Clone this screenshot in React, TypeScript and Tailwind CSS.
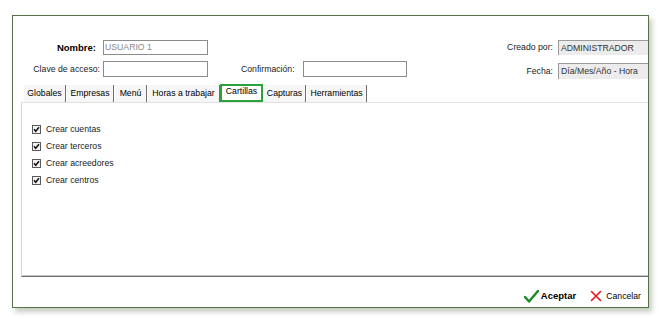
import React from "react";

const tabs = [
  { name: "Globales", w: "w-[43px]" },
  { name: "Empresas", w: "w-[48px]" },
  { name: "Menú", w: "w-[33px]" },
  { name: "Horas a trabajar", w: "w-[73px]" },
  { name: "Cartillas", w: "w-[43px]", active: true },
  { name: "Capturas", w: "w-[43px]" },
  { name: "Herramientas", w: "w-[61px]" },
];

const items = ["Crear cuentas", "Crear terceros", "Crear acreedores", "Crear centros"];

function Check() {
  return (
    <svg width="9" height="9" viewBox="0 0 9 9" className="shrink-0">
      <rect x="0.5" y="0.5" width="8" height="8" fill="#f2f2f2" stroke="#5a5a5a" />
      <path d="M2 4.3 L3.7 6.3 L7 2.3" fill="none" stroke="#111" strokeWidth="1.5" />
    </svg>
  );
}

export default function App() {
  return (
    <div className="w-[665px] h-[319px] bg-white pt-[15px] pl-[12px] font-['Liberation_Sans',_Arial,_sans-serif] text-[8.7px] text-[#1a1a1a] leading-none">
      <div className="w-[637px] h-[293px] border border-[#56724a] bg-white flex flex-col shadow-[3px_4px_5px_rgba(90,110,80,0.35)]">
        {/* Row 1 */}
        <div className="mt-[24px] flex items-center h-[15px]">
          <span className="w-[83px] text-right font-bold text-[9.5px] text-black">Nombre:</span>
          <div className="ml-[7px] w-[105px] h-[15px] border border-[#8c8c8c] bg-white flex items-center pl-[1px] text-[#8a8a8a]">
            USUARIO 1
          </div>
          <div className="flex-1" />
          <span className="mr-[5px]">Creado por:</span>
          <div className="w-[90px] h-[15px] bg-[#ececec] border-l border-t border-[#9a9a9a] flex items-center pl-[2px] text-[#333]">
            ADMINISTRADOR
          </div>
        </div>
        {/* Row 2 */}
        <div className="mt-[6px] flex items-center h-[16px]">
          <span className="w-[87px] text-right">Clave de acceso:</span>
          <div className="ml-[3px] w-[105px] h-[16px] border border-[#8c8c8c] bg-white" />
          <span className="ml-[33px]">Confirmación:</span>
          <div className="ml-[8px] w-[104px] h-[16px] border border-[#8c8c8c] bg-white" />
          <div className="flex-1" />
          <span className="mr-[5px] mt-[4px]">Fecha:</span>
          <div className="mt-[4px] w-[90px] h-[16px] bg-[#ececec] border-l border-t border-[#9a9a9a] flex items-center pl-[2px] text-[#333]">
            Día/Mes/Año - Hora
          </div>
        </div>
        {/* Tabs */}
        <div className="mt-[7px] ml-[8px] pl-[2px] h-[18px] flex items-end">
          {tabs.map((t) =>
            t.active ? (
              <div
                key={t.name}
                className={`${t.w} h-[18px] border-2 border-[#2aa33c] bg-white flex items-center justify-center pb-[3px] text-black relative z-10`}
              >
                {t.name}
              </div>
            ) : (
              <div
                key={t.name}
                className={`${t.w} h-[17px] bg-[#f6f6f6] border-l border-white border-r border-r-[#6e6e6e] flex items-center justify-center text-black`}
              >
                {t.name}
              </div>
            )
          )}
        </div>
        {/* Panel */}
        <div className="ml-[8px] flex-1 border-l border-t border-b border-l-[#d6d6d6] border-t-[#e2e2e2] border-b-[#6c6c6c] shadow-[inset_0_-1px_0_#c8c8c8] pl-[10px] pt-[22px] flex flex-col gap-[8px]">
          {items.map((it) => (
            <div key={it} className="flex items-center h-[9px] gap-[5px]">
              <Check />
              <span>{it}</span>
            </div>
          ))}
        </div>
        {/* Footer */}
        <div className="h-[30px] pt-[8px] flex items-center justify-end pr-[7px]">
          <svg width="15" height="13" viewBox="0 0 15 13" className="mr-[2px]">
            <path d="M1 7 L5 11.5 L14 1" fill="none" stroke="#1a8a22" strokeWidth="2.4" strokeLinecap="round" strokeLinejoin="round" />
          </svg>
          <span className="font-bold text-[9.5px] text-black">Aceptar</span>
          <svg width="12" height="12" viewBox="0 0 12 12" className="ml-[14px] mr-[4px]">
            <path d="M1.5 1.5 L10.5 10.5 M10.5 1.5 L1.5 10.5" fill="none" stroke="#e8141c" strokeWidth="1.6" strokeLinecap="round" />
          </svg>
          <span className="text-black">Cancelar</span>
        </div>
      </div>
    </div>
  );
}
